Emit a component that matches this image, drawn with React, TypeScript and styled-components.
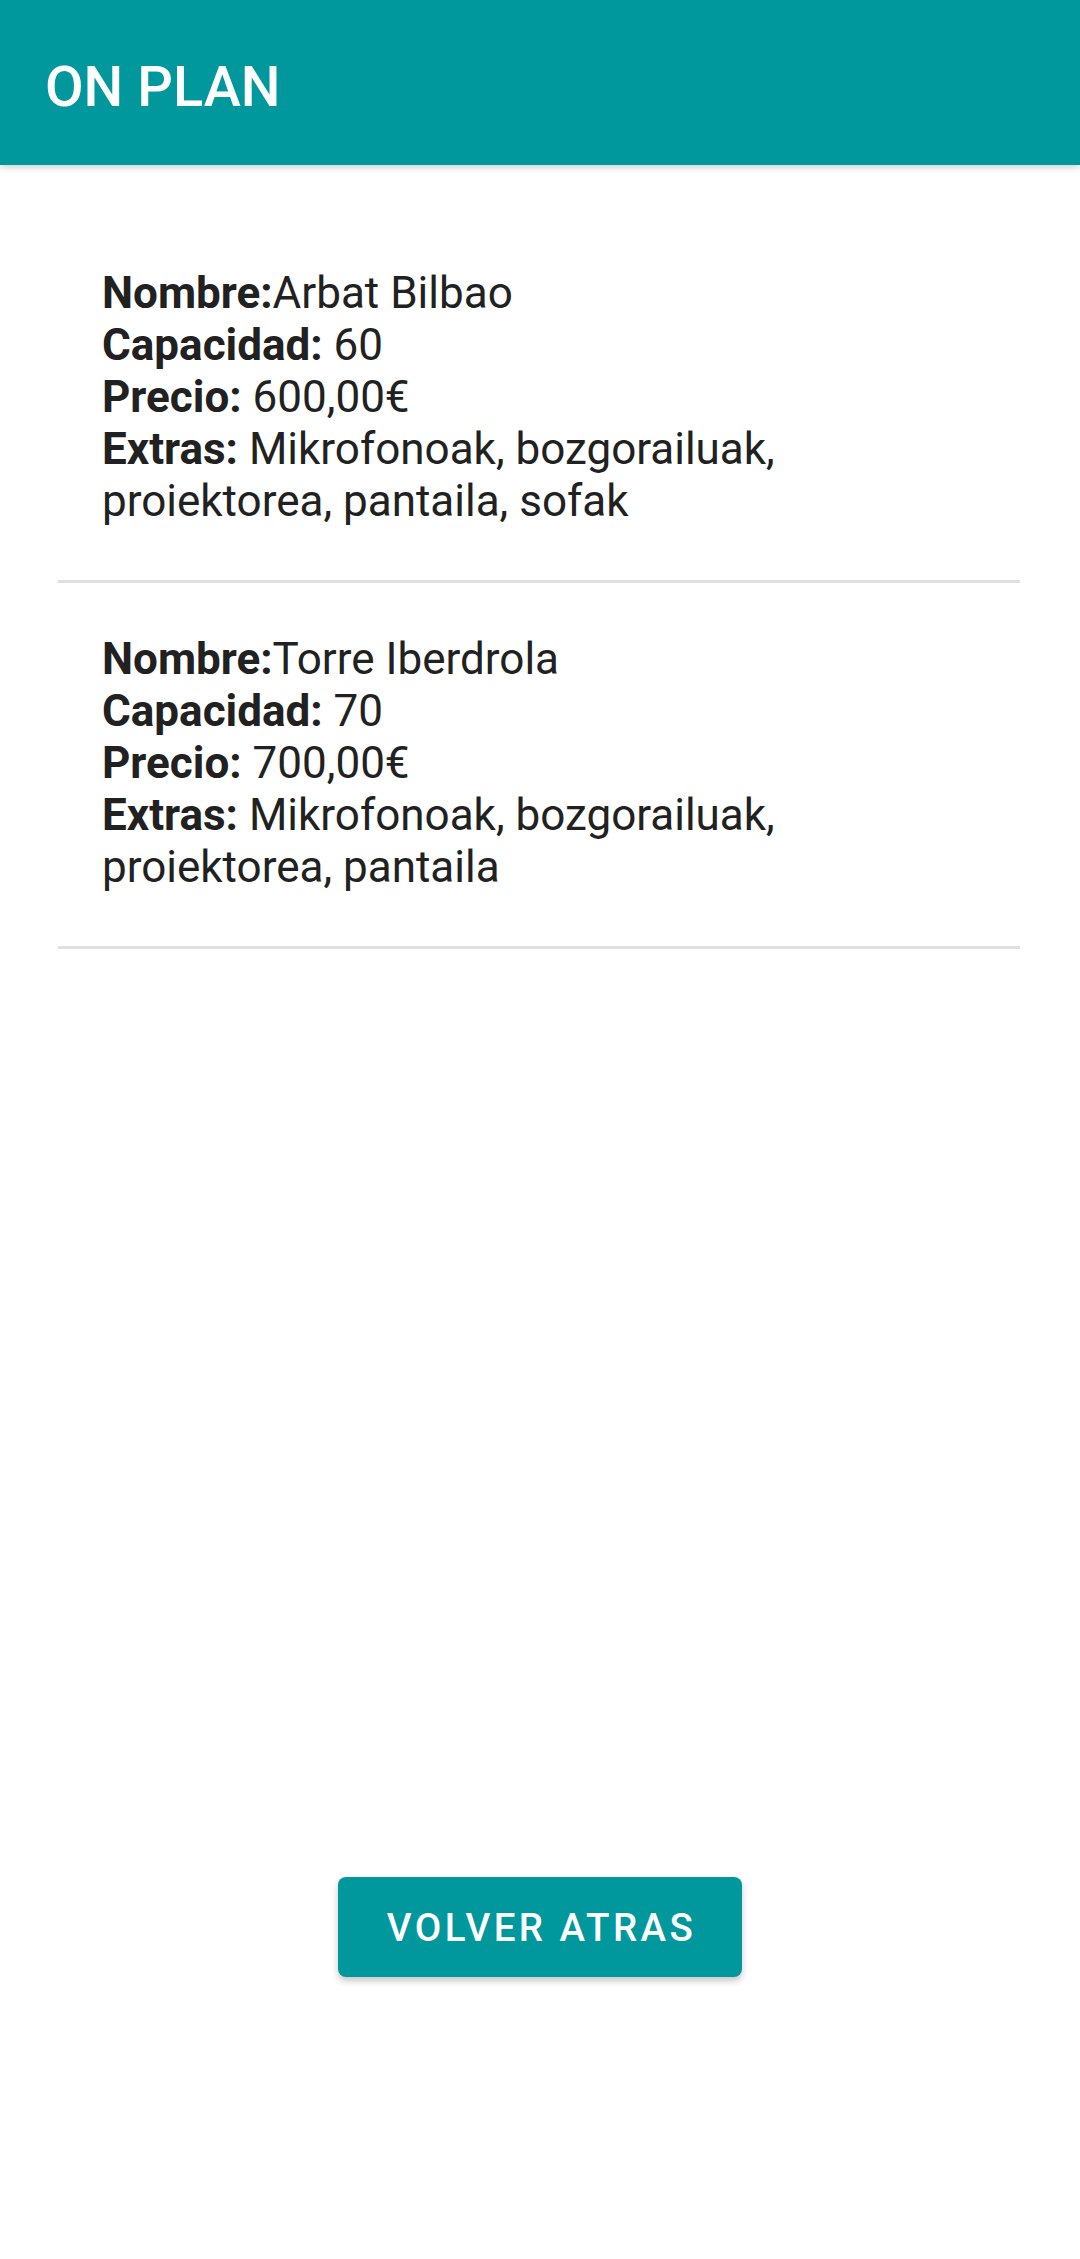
import React from "react";
import styled, { createGlobalStyle } from "styled-components";

const GlobalStyle = createGlobalStyle`
  html, body {
    margin: 0;
    padding: 0;
    background: #ffffff;
  }
  body {
    font-family: Roboto, "Noto Sans", "Liberation Sans", sans-serif;
    color: #212121;
  }
  * { box-sizing: border-box; }
`;

const Page = styled.div`
  display: flex;
  flex-direction: column;
  min-height: 100vh;
  background: #ffffff;
`;

const Toolbar = styled.header`
  height: 165px;
  background: #00979d;
  padding: 54px 0 0 45px;
  box-shadow: 0 3px 6px rgba(0, 0, 0, 0.16);
  position: relative;
  z-index: 1;
`;

const Title = styled.h1`
  margin: 0;
  font-family: Roboto, "Liberation Sans", sans-serif;
  font-weight: 500;
  font-size: 56px;
  line-height: normal;
  color: #ffffff;
`;

const List = styled.ul`
  list-style: none;
  margin: 0 60px 0 58px;
  padding: 52px 0 0 0;
`;

const Item = styled.li`
  padding: 50px 44px 53px 44px;
  border-bottom: 3px solid #e0e0e0;
  font-size: 44px;
  line-height: 52px;
  color: #212121;
`;

const Line = styled.div`
  margin: 0;
`;

const Label = styled.b`
  font-weight: 700;
`;

const Footer = styled.div`
  margin-top: auto;
  display: flex;
  justify-content: center;
  padding-bottom: 282px;
`;

const Button = styled.button`
  width: 404px;
  height: 100px;
  border: none;
  border-radius: 8px;
  background: #00979d;
  color: #ffffff;
  font-family: Roboto, "Liberation Sans", sans-serif;
  font-weight: 500;
  font-size: 38.5px;
  letter-spacing: 3.4px;
  text-transform: uppercase;
  box-shadow: 0 4px 7px rgba(0, 0, 0, 0.22);
  display: flex;
  align-items: center;
  justify-content: center;
  padding: 0 0 0 3px;
  cursor: pointer;
`;

type Venue = {
  nombre: string;
  capacidad: number;
  precio: string;
  extras: string;
};

const venues: Venue[] = [
  {
    nombre: "Arbat Bilbao",
    capacidad: 60,
    precio: "600,00€",
    extras: "Mikrofonoak, bozgorailuak, proiektorea, pantaila, sofak",
  },
  {
    nombre: "Torre Iberdrola",
    capacidad: 70,
    precio: "700,00€",
    extras: "Mikrofonoak, bozgorailuak, proiektorea, pantaila",
  },
];

export default function App() {
  return (
    <>
      <GlobalStyle />
      <Page>
        <Toolbar>
          <Title>ON PLAN</Title>
        </Toolbar>
        <List>
          {venues.map((v) => (
            <Item key={v.nombre}>
              <Line>
                <Label>Nombre:</Label>
                {v.nombre}
              </Line>
              <Line>
                <Label>Capacidad:</Label> {v.capacidad}
              </Line>
              <Line>
                <Label>Precio:</Label> {v.precio}
              </Line>
              <Line>
                <Label>Extras:</Label> {v.extras}
              </Line>
            </Item>
          ))}
        </List>
        <Footer>
          <Button>Volver atras</Button>
        </Footer>
      </Page>
    </>
  );
}
